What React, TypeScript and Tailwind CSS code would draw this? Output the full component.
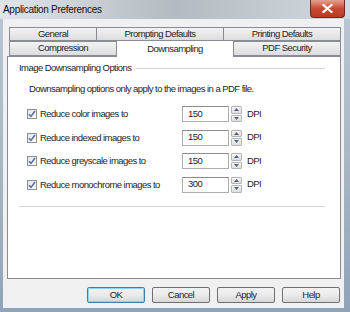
import React from "react";

const font = { fontFamily: '"Liberation Sans", Arial, sans-serif' };
const T = "text-[9.5px] tracking-[-0.55px] text-[#1e1e1e]";

function Check() {
  return (
    <div className="w-[10px] h-[10px] border border-[#8e8f8f] bg-gradient-to-br from-[#e3e3e3] to-[#ffffff] flex items-center justify-center shrink-0">
      <svg width="8" height="8" viewBox="0 0 8 8">
        <path d="M1 4.2 L3 6.5 L7 1" fill="none" stroke="#4a6cb3" strokeWidth="1.4" />
      </svg>
    </div>
  );
}

function Spinner() {
  return (
    <div className="flex flex-col w-[11px] h-[16px] gap-[1px]">
      <div className="flex-1 border border-[#b5b5b5] rounded-[1px] bg-gradient-to-b from-[#f5f5f5] to-[#dedede] flex items-center justify-center">
        <svg width="5" height="3" viewBox="0 0 5 3"><path d="M0 3 L2.5 0 L5 3 Z" fill="#4d6185" /></svg>
      </div>
      <div className="flex-1 border border-[#b5b5b5] rounded-[1px] bg-gradient-to-b from-[#f5f5f5] to-[#dedede] flex items-center justify-center">
        <svg width="5" height="3" viewBox="0 0 5 3"><path d="M0 0 L2.5 3 L5 0 Z" fill="#4d6185" /></svg>
      </div>
    </div>
  );
}

function Row({ label, value }: { label: string; value: string }) {
  return (
    <div className="flex items-center h-[16px]">
      <div className="w-[174px] flex items-center pl-[19px] gap-[3px]">
        <Check />
        <span className={T + " leading-none"}>{label}</span>
      </div>
      <div className={"w-[47px] h-[16px] border border-[#abadb3] border-t-[#8a8c92] bg-white flex items-center pl-[5px] " + T}>
        {value}
      </div>
      <div className="ml-[2px]">
        <Spinner />
      </div>
      <span className={"ml-[5px] " + T}>DPI</span>
    </div>
  );
}

function Tab({ w, label, selected }: { w: number; label: string; selected?: boolean }) {
  return (
    <div
      style={{ width: w }}
      className={
        selected
          ? "h-[17px] -mt-[1px] -mb-[1px] relative z-10 bg-white border border-b-0 border-[#898c95] flex items-start justify-center pt-[1px] " + T
          : "h-full bg-gradient-to-b from-[#f3f3f3] to-[#dddddd] border border-[#898c95] -ml-[1px] first:ml-0 flex items-center justify-center " + T
      }
    >
      {label}
    </div>
  );
}

function Btn({ label, def }: { label: string; def?: boolean }) {
  return (
    <div
      className={
        "w-[58px] h-[16px] rounded-[2px] border flex items-center justify-center bg-gradient-to-b from-[#f2f2f2] via-[#ebebeb] to-[#d6d6d6] " +
        T +
        (def ? " border-[#3c7fb1] shadow-[inset_0_0_0_1px_#8fd2f5]" : " border-[#707070]")
      }
    >
      {label}
    </div>
  );
}

export default function App() {
  return (
    <div
      style={font}
      className="w-[350px] h-[312px] flex flex-col bg-gradient-to-b from-[#b9c7d5] via-[#aab7c4] to-[#8fa3b8] overflow-hidden"
    >
      <div className="h-[19px] flex items-start justify-between bg-gradient-to-r from-[#dfe5ea] via-[#b3bac1] to-[#d2d9df] shrink-0">
        <span className="pl-[3px] pt-[3px] text-[10px] tracking-[-0.3px] text-[#111] leading-[13px]">Application Preferences</span>
        <div className="mr-[5px] w-[35px] h-[18px] rounded-b-[4px] border border-t-0 border-[#6b2a22] bg-gradient-to-b from-[#e3a08f] via-[#c74b33] to-[#b83a22] flex items-center justify-center">
          <svg width="11" height="9" viewBox="0 0 11 9">
            <path d="M1.5 1 L9.5 8 M9.5 1 L1.5 8" stroke="#ffffff" strokeWidth="2.2" strokeLinecap="square" />
          </svg>
        </div>
      </div>
      <div className="ml-[3px] mr-[6px] mb-[4px] flex-1 bg-[#f0f0f0] flex flex-col pt-[8px] pl-[4px] pr-[3px]">
        <div className="flex h-[14px] pl-[2px]">
          <Tab w={88} label="General" />
          <Tab w={128} label="Prompting Defaults" />
          <Tab w={118} label="Printing Defaults" />
        </div>
        <div className="flex h-[15px] pl-[2px]">
          <Tab w={108} label="Compression" />
          <div className="-ml-[1px] flex">
            <Tab w={118} label="Downsampling" selected />
          </div>
          <Tab w={108} label="PDF Security" />
        </div>
        <div className="w-[334px] h-[223px] bg-white border border-[#898c95] flex flex-col">
          <div className="flex items-center mt-[6px] pl-[11px] pr-[15px]">
            <span className={T + " leading-none"}>Image Downsampling Options</span>
            <div className="flex-1 h-[1px] bg-[#d5d5d5] ml-[5px] mt-[1px]" />
          </div>
          <div className={"pl-[21px] mt-[11px] leading-none " + T}>
            Downsampling options only apply to the images in a PDF file.
          </div>
          <div className="flex flex-col gap-[7.5px] mt-[13px]">
            <Row label="Reduce color images to" value="150" />
            <Row label="Reduce indexed images to" value="150" />
            <Row label="Reduce greyscale images to" value="150" />
            <Row label="Reduce monochrome images to" value="300" />
          </div>
          <div className="ml-[11px] mr-[15px] mt-[13px] h-[1px] bg-[#d5d5d5]" />
        </div>
        <div className="flex justify-end gap-[7px] mt-[8px] pr-[1px]">
          <Btn label="OK" def />
          <Btn label="Cancel" />
          <Btn label="Apply" />
          <Btn label="Help" />
        </div>
      </div>
    </div>
  );
}
